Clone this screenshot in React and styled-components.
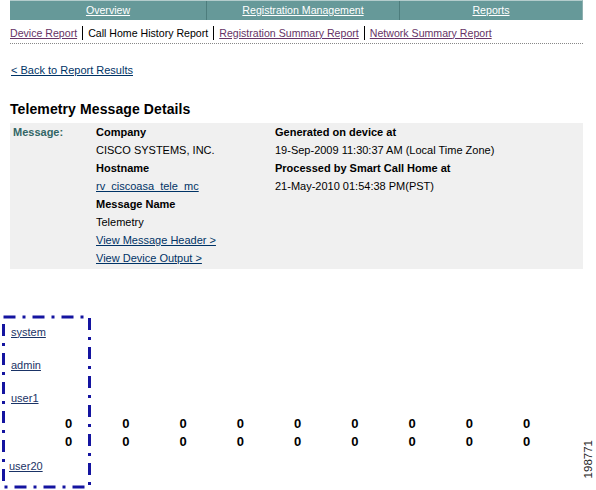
import React from "react";
import styled, { createGlobalStyle } from "styled-components";

const Global = createGlobalStyle`
  html, body { margin: 0; padding: 0; background: #fff; }
  body { font-family: "Liberation Sans", Arial, sans-serif; font-size: 11px; color: #000; }
`;

const Page = styled.div`
  position: relative;
  width: 596px;
  height: 490px;
  overflow: hidden;
`;

const Content = styled.div`
  padding: 0 13px 0 10px;
`;

const NavBar = styled.div`
  display: grid;
  grid-template-columns: 196px 193px 1fr;
  height: 20px;
  background: #669999;
  border-top: 1px solid #b3cccc;
  border-right: 1px solid #8fb0b0;
  box-sizing: border-box;
`;

const NavCell = styled.a`
  display: block;
  text-align: center;
  color: #fff;
  text-decoration: underline;
  font-size: 10.6px;
  line-height: 18px;
  border-left: ${(p) => (p.$first ? "none" : "1px solid #4d7d7d")};
`;

const SubNav = styled.div`
  display: flex;
  align-items: center;
  height: 21px;
  margin-top: 2px;
  border-bottom: 1px dotted #888;
  font-size: 10.6px;
`;

const SubItem = styled.span`
  padding: 0 5px;
  border-left: ${(p) => (p.$first ? "none" : "1px solid #000")};
  padding-left: ${(p) => (p.$first ? "0" : "5px")};
  line-height: 14px;
  color: ${(p) => (p.$active ? "#000" : "#663366")};
  text-decoration: ${(p) => (p.$active ? "none" : "underline")};
`;

const BackLink = styled.a`
  display: block;
  margin-top: 19px;
  color: #003366;
  text-decoration: underline;
  font-size: 11px;
  line-height: 14px;
  padding-left: 1px;
`;

const Title = styled.h1`
  margin: 22px 0 0 0;
  font-size: 14px;
  font-weight: bold;
  line-height: 20px;
  letter-spacing: 0.1px;
`;

const Panel = styled.div`
  margin-top: 4px;
  background: #f0f0f0;
  display: grid;
  grid-template-columns: 83px 179px 1fr;
  grid-auto-rows: 18px;
  padding: 0 0 2px 3px;
  align-items: center;
`;

const Label = styled.div`
  grid-row: 1;
  grid-column: 1;
  color: #336666;
  font-weight: bold;
  font-size: 11px;
`;

const Cell = styled.div`
  grid-column: ${(p) => p.$col};
  font-weight: ${(p) => (p.$bold ? "bold" : "normal")};
  white-space: nowrap;
`;

const PanelLink = styled.a`
  color: #003366;
  text-decoration: underline;
`;

const Lower = styled.div`
  margin-top: 46px;
  position: relative;
`;

const UserRow = styled.div`
  height: ${(p) => p.$h}px;
  display: flex;
  align-items: center;
  padding-left: ${(p) => p.$pad}px;
`;

const UserLink = styled.a`
  color: #1a3366;
  text-decoration: underline;
  font-size: 11px;
`;

const ZeroRow = styled.div`
  display: grid;
  grid-template-columns: repeat(9, 57.25px);
  height: 18px;
  align-items: center;
  padding-left: 15px;
`;

const Zero = styled.span`
  text-align: right;
  font-weight: bold;
  font-size: 13px;
`;

const Annotation = styled.svg`
  position: absolute;
  left: 1px;
  top: 314px;
`;

const FigNum = styled.div`
  position: absolute;
  right: 2px;
  top: 440px;
  writing-mode: vertical-rl;
  transform: rotate(180deg);
  font-size: 11.5px;
  line-height: 12px;
  color: #222;
`;

const zeros = Array.from({ length: 9 });

export default function App() {
  return (
    <Page>
      <Global />
      <Content>
        <NavBar>
          <NavCell $first>Overview</NavCell>
          <NavCell>Registration Management</NavCell>
          <NavCell>Reports</NavCell>
        </NavBar>
        <SubNav>
          <SubItem $first>Device Report</SubItem>
          <SubItem $active>Call Home History Report</SubItem>
          <SubItem>Registration Summary Report</SubItem>
          <SubItem>Network Summary Report</SubItem>
        </SubNav>
        <BackLink>&lt; Back to Report Results</BackLink>
        <Title>Telemetry Message Details</Title>
        <Panel>
          <Label>Message:</Label>
          <Cell $col={2} $bold>Company</Cell>
          <Cell $col={3} $bold>Generated on device at</Cell>
          <Cell $col={2}>CISCO SYSTEMS, INC.</Cell>
          <Cell $col={3}>19-Sep-2009 11:30:37 AM (Local Time Zone)</Cell>
          <Cell $col={2} $bold>Hostname</Cell>
          <Cell $col={3} $bold>Processed by Smart Call Home at</Cell>
          <Cell $col={2}><PanelLink>rv_ciscoasa_tele_mc</PanelLink></Cell>
          <Cell $col={3}>21-May-2010 01:54:38 PM(PST)</Cell>
          <Cell $col={2} $bold>Message Name</Cell>
          <Cell $col={2}>Telemetry</Cell>
          <Cell $col={2}><PanelLink>View Message Header &gt;</PanelLink></Cell>
          <Cell $col={2}><PanelLink>View Device Output &gt;</PanelLink></Cell>
        </Panel>
      </Content>
      <Lower>
        <UserRow $h={33} $pad={11}><UserLink>system</UserLink></UserRow>
        <UserRow $h={33} $pad={11}><UserLink>admin</UserLink></UserRow>
        <UserRow $h={33} $pad={11}><UserLink>user1</UserLink></UserRow>
        <ZeroRow>{zeros.map((_, i) => <Zero key={i}>0</Zero>)}</ZeroRow>
        <ZeroRow>{zeros.map((_, i) => <Zero key={i}>0</Zero>)}</ZeroRow>
        <UserRow $h={32} $pad={9}><UserLink>user20</UserLink></UserRow>
      </Lower>
      <Annotation width="92" height="176" viewBox="0 0 92 176">
        <rect x="2.5" y="3" width="86" height="170" fill="none" stroke="#1414a0" strokeWidth="3" strokeDasharray="12 7 3 7" />
      </Annotation>
      <FigNum>198771</FigNum>
    </Page>
  );
}
